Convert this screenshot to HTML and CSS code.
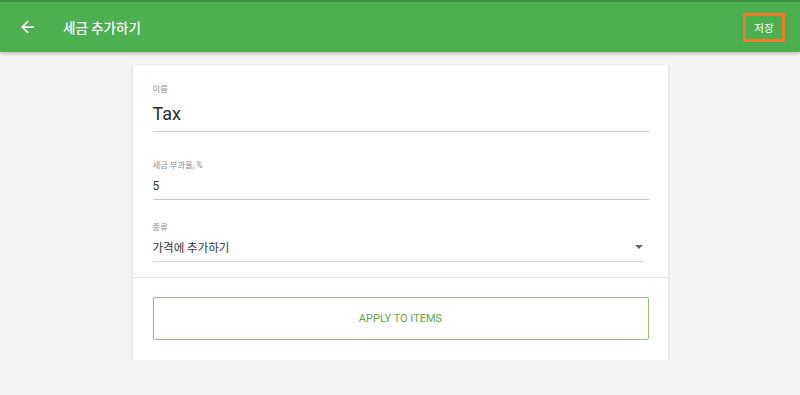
FILE: index.html
```html
<!DOCTYPE html>
<html>

<head>
    <title>세금 추가하기</title>
    <link rel="stylesheet" href="styles.css">
</head>

<body>
    <header class="topbar">
        <button class="back">
            <svg width="14" height="14" viewBox="0 0 16 16">
                <path d="M15 7H3.8l5.1-5.1L7.5 0.5 0 8l7.5 7.5 1.4-1.4L3.8 9H15z" fill="#fff" />
            </svg>
        </button>
        <h1>세금 추가하기</h1>
        <button class="save">저장</button>
    </header>
    <main>
        <div class="card">
            <div class="fields">
                <div class="field name">
                    <label>이름</label>
                    <div class="value big">Tax</div>
                </div>
                <div class="field">
                    <label>세금 부과율, %</label>
                    <div class="value">5</div>
                </div>
                <div class="field select">
                    <label>종류</label>
                    <div class="value">가격에 추가하기 <span class="caret"></span></div>
                </div>
            </div>
            <div class="actions">
                <button class="apply">APPLY TO ITEMS</button>
            </div>
        </div>
    </main>
</body>

</html>
```

FILE: styles.css
```css
body {
    margin: 0;
    background-color: #f4f4f4;
    font-family: Roboto, "Noto Sans CJK KR", sans-serif;
}

.topbar {
    display: flex;
    align-items: center;
    height: 50px;
    background-color: #4caf50;
    border-top: 2px solid #3d9140;
    box-shadow: 0 1px 4px rgba(0, 0, 0, 0.3);
    padding: 0 15px 0 20px;
}

.topbar h1 {
    margin: 0 0 0 27px;
    color: white;
    font-size: 13.5px;
    font-weight: 500;
    flex: 1;
}

.back {
    background: none;
    border: 0;
    padding: 0;
    width: 16px;
    height: 16px;
    display: flex;
    align-items: center;
    justify-content: center;
}

.save {
    background: none;
    border: 3px solid #f47b2a;
    color: white;
    font-family: inherit;
    font-size: 10.5px;
    width: 42px;
    height: 29px;
    padding: 0;
    margin-top: 1px;
}

main {
    display: flex;
    justify-content: center;
    padding-top: 13px;
}

.card {
    width: 535px;
    background-color: white;
    box-shadow: 0 1px 3px rgba(0, 0, 0, 0.15);
}

.fields {
    padding: 19px 19px 15px 20px;
    border-bottom: 1px solid #e4e4e4;
}

.field {
    border-bottom: 1px solid #c8c8c8;
    margin-bottom: 22px;
}

.field.name {
    margin-bottom: 28px;
}

.field:last-child {
    margin-bottom: 0;
    margin-right: 6px;
    border-bottom-color: #d4d4d4;
}

.field label {
    display: block;
    font-size: 8.3px;
    color: #8a8a8a;
    height: 11px;
    line-height: 11px;
}

.value {
    font-size: 12px;
    color: #333;
    height: 22px;
    line-height: 22px;
    padding: 4px 0 2px;
    position: relative;
}

.select .value {
    font-size: 11.5px;
}

.value.big {
    font-size: 18px;
    color: #2a2a2a;
    height: 28px;
    line-height: 28px;
    padding: 5px 0 3px;
}

.caret {
    position: absolute;
    right: 0;
    top: 12px;
    border-left: 4px solid transparent;
    border-right: 4px solid transparent;
    border-top: 4px solid #666;
}

.actions {
    padding: 19px 19px 20px 20px;
}

.apply {
    display: block;
    width: 100%;
    height: 43px;
    background: white;
    border: 1px solid #8fbc7a;
    border-radius: 2px;
    color: #5ea640;
    font-family: inherit;
    font-size: 11px;
}
```
